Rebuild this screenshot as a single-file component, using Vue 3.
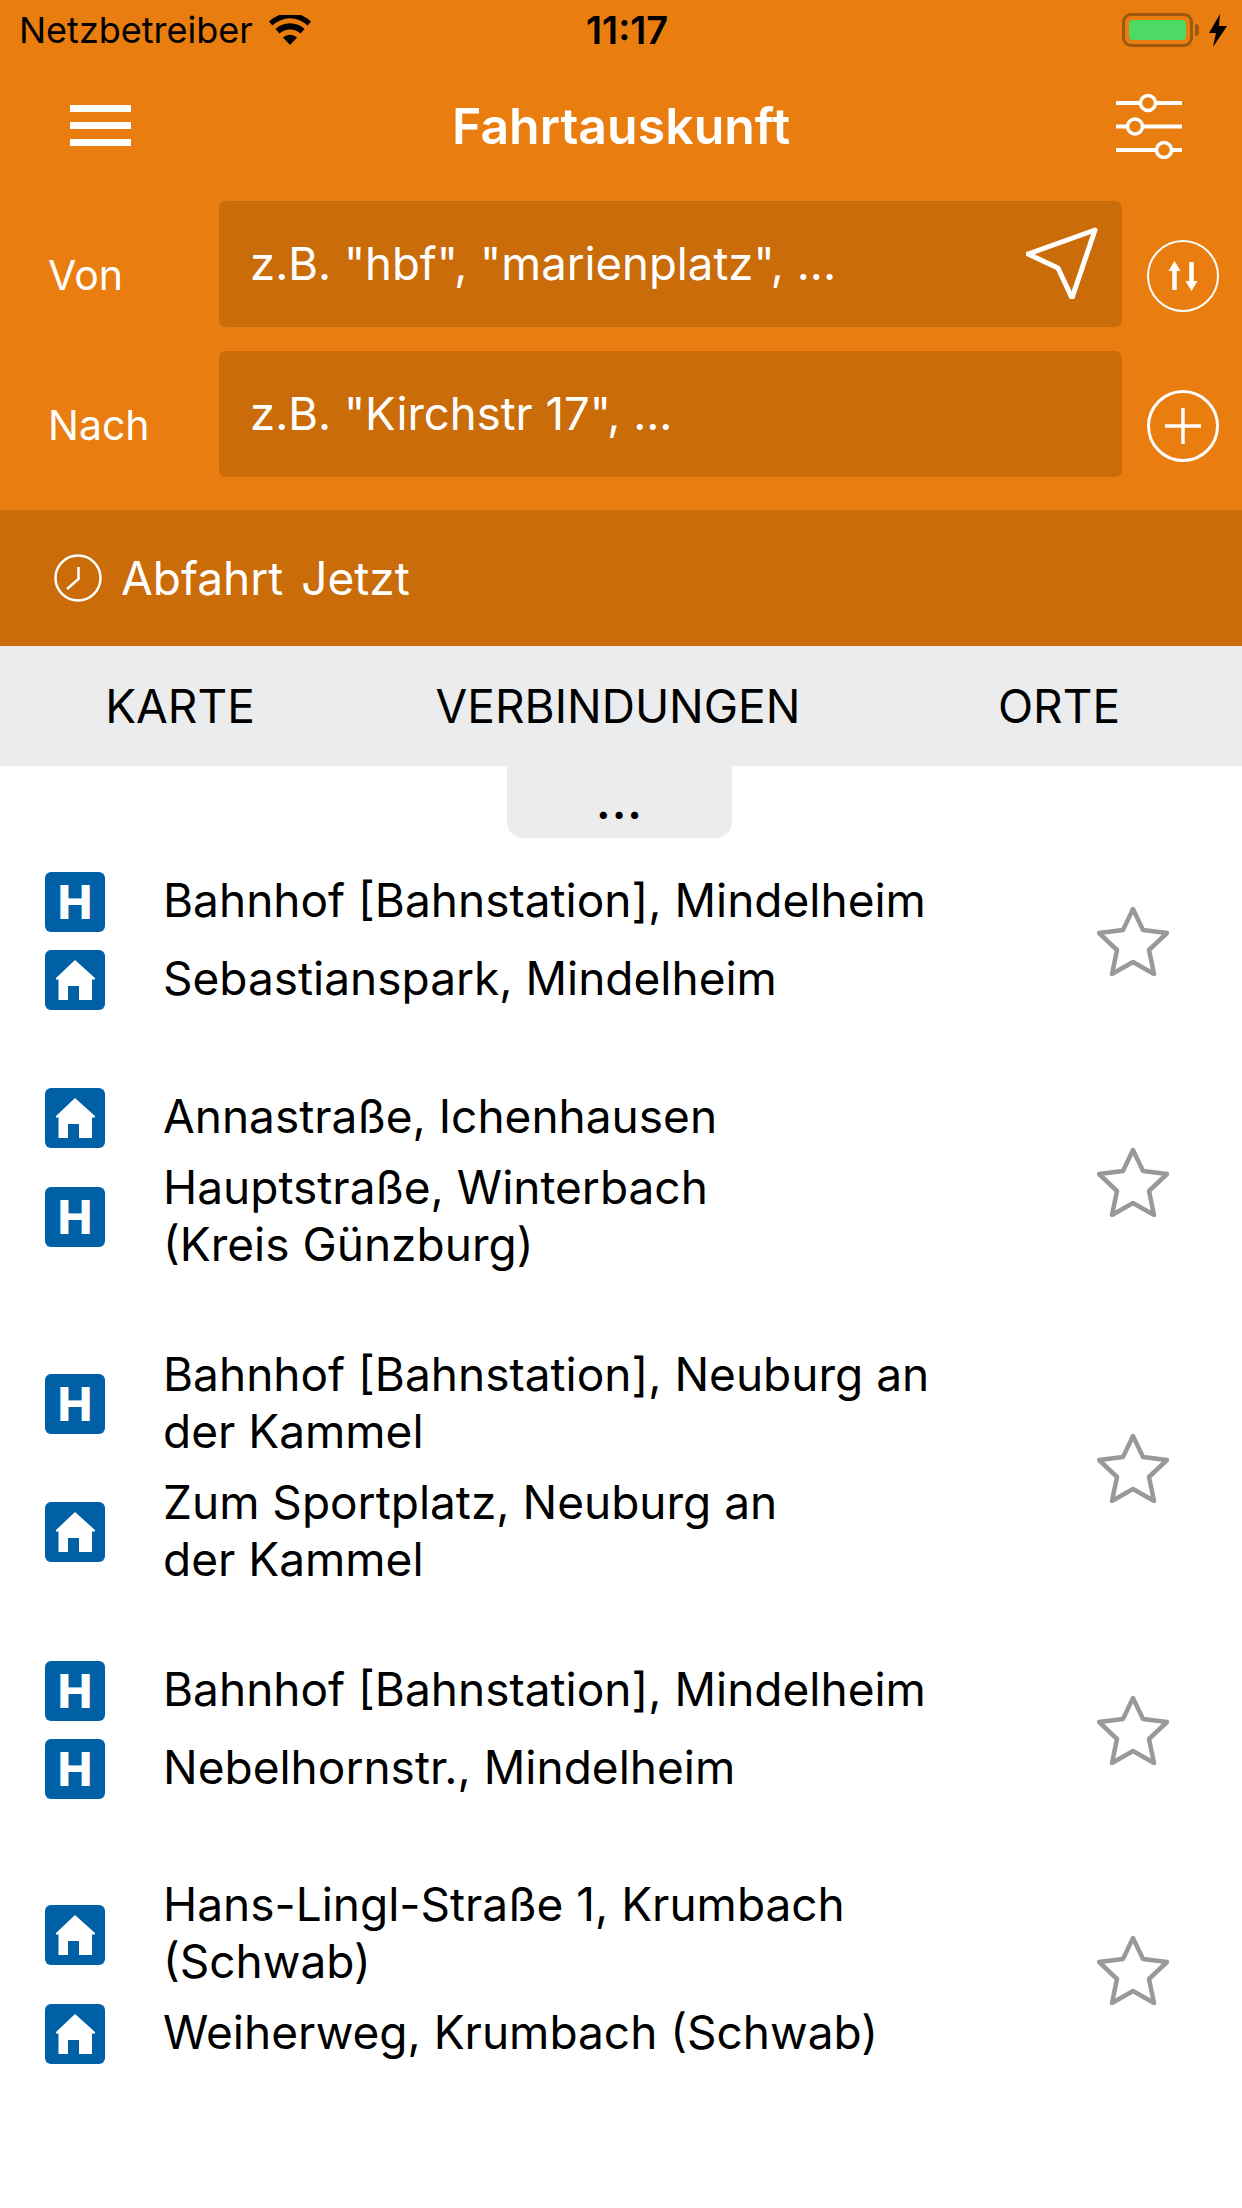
<template>
  <div class="screen">
    <header class="head">
      <div class="status">
        <span class="carrier">Netzbetreiber</span>
        <svg class="wifi" viewBox="0 0 42 30" width="42" height="30">
          <path d="M21 30 L14 22.5 A10 10 0 0 1 28 22.5 Z" fill="#000" />
          <path d="M10.5 18.5 L6.5 14 A21 21 0 0 1 35.500 14 L31.500 18.5 A15.500 15.500 0 0 0 10.500 18.500 Z" fill="#000" />
          <path d="M3.500 10.500 L0 6.500 A30 30 0 0 1 42 6.500 L38.500 10.500 A25 25 0 0 0 3.500 10.500 Z" fill="#000" />
        </svg>
        <span class="time">11:17</span>
        <div class="battery">
          <span class="cell"><span class="charge"></span></span>
          <span class="nub"></span>
          <svg class="bolt" viewBox="0 0 18 33" width="18" height="33">
            <path d="M11 0 L0 19 L7 19 L4 33 L18 12 L10 12 Z" fill="#000" />
          </svg>
        </div>
      </div>

      <div class="nav">
        <button class="menu" aria-label="Menü"><span></span><span></span><span></span></button>
        <h1>Fahrtauskunft</h1>
        <svg class="sliders" viewBox="0 0 66 66" width="66" height="66" fill="none" stroke="#fff">
          <path d="M0 10H66M0 33.500H66M0 57H66" stroke-width="4" />
          <circle cx="32" cy="10" r="7.500" fill="#e97d0f" stroke-width="3.500" />
          <circle cx="19" cy="33.500" r="7.500" fill="#e97d0f" stroke-width="3.500" />
          <circle cx="48" cy="57" r="7.500" fill="#e97d0f" stroke-width="3.500" />
        </svg>
      </div>

      <div class="field-row">
        <label>Von</label>
        <div class="field">
          <span>z.B. "hbf", "marienplatz", ...</span>
          <svg class="locate" viewBox="0 0 72 72" width="72" height="72" fill="none" stroke="#fff" stroke-width="5" stroke-linejoin="round">
            <path d="M69 3 L2 27 L32 41 L46 71 Z" />
          </svg>
        </div>
        <svg class="round" viewBox="0 0 72 72" width="72" height="72" fill="none" stroke="#fff">
          <circle cx="36" cy="36" r="35" stroke-width="2" />
          <path d="M27.500 50V27M44.500 22V45" stroke-width="4.500" />
          <path d="M27.500 21 L33.500 31 H21.500 Z M44.500 51 L38.500 41 H50.500 Z" fill="#fff" stroke="none" />
        </svg>
      </div>
      <div class="field-row">
        <label>Nach</label>
        <div class="field"><span>z.B. "Kirchstr 17", ...</span></div>
        <svg class="round" viewBox="0 0 72 72" width="72" height="72" fill="none" stroke="#fff">
          <circle cx="36" cy="36" r="34.500" stroke-width="3" />
          <path d="M18 36H54M36 18V54" stroke-width="3.500" />
        </svg>
      </div>
    </header>

    <div class="when">
      <svg viewBox="0 0 48 48" width="48" height="48" fill="none" stroke="#fff" stroke-width="2.500">
        <circle cx="24" cy="24" r="22.500" />
        <path d="M24.500 13V25L13 35" />
      </svg>
      <span>Abfahrt&nbsp;&nbsp;Jetzt</span>
    </div>

    <nav class="tabs">
      <span v-for="tab in tabs" :key="tab">{{ tab }}</span>
    </nav>
    <div class="more">...</div>

    <ul class="trips">
      <li v-for="(trip, i) in trips" :key="i" :class="{ short: trip.every(s => s.lines.length === 1) }">
        <div class="stops">
          <div v-for="(stop, j) in trip" :key="j" class="stop">
            <span class="badge">
              <b v-if="stop.type === 'h'">H</b>
              <svg v-else viewBox="0 0 60 60" width="60" height="60">
                <path d="M30 10 L11 28 V29.500 H13.500 V50 H23 V36 H34 V50 H47 V29.500 H50 V28 Z" fill="#fff" />
              </svg>
            </span>
            <div class="name">
              <div v-for="line in stop.lines" :key="line">{{ line }}</div>
            </div>
          </div>
        </div>
        <svg class="star" viewBox="0 0 72 70" width="72" height="70" fill="none" stroke="#999" stroke-width="4.500" stroke-linejoin="round">
          <path d="M36 3 L46 24 L70 27 L52 44 L57 68 L36 56 L15 68 L20 44 L2 27 L26 24 Z" />
        </svg>
      </li>
    </ul>
  </div>
</template>

<script setup>
const tabs = ['KARTE', 'VERBINDUNGEN', 'ORTE']

const trips = [
  [
    { type: 'h', lines: ['Bahnhof [Bahnstation], Mindelheim'] },
    { type: 'home', lines: ['Sebastianspark, Mindelheim'] }
  ],
  [
    { type: 'home', lines: ['Annastraße, Ichenhausen'] },
    { type: 'h', lines: ['Hauptstraße, Winterbach', '(Kreis Günzburg)'] }
  ],
  [
    { type: 'h', lines: ['Bahnhof [Bahnstation], Neuburg an', 'der Kammel'] },
    { type: 'home', lines: ['Zum Sportplatz, Neuburg an', 'der Kammel'] }
  ],
  [
    { type: 'h', lines: ['Bahnhof [Bahnstation], Mindelheim'] },
    { type: 'h', lines: ['Nebelhornstr., Mindelheim'] }
  ],
  [
    { type: 'home', lines: ['Hans-Lingl-Straße 1, Krumbach', '(Schwab)'] },
    { type: 'home', lines: ['Weiherweg, Krumbach (Schwab)'] }
  ]
]
</script>

<style>
html, body {
  margin: 0;
  background: #fff;
}
</style>

<style scoped>
.screen {
  width: 1242px;
  height: 2208px;
  overflow: hidden;
  font-family: Inter, "Liberation Sans", sans-serif;
  color: #000;
  background: #fff;
}

.head {
  height: 510px;
  box-sizing: border-box;
  background: #e97d0f;
  color: #fff;
}

.status {
  display: flex;
  align-items: center;
  height: 60px;
  padding-left: 19px;
  color: #000;
  font-size: 36px;
  position: relative;
}
.wifi {
  margin-left: 16px;
}
.time {
  position: absolute;
  left: 586px;
  font-weight: 600;
  font-size: 38px;
}
.battery {
  margin-left: auto;
  margin-right: 15px;
  display: flex;
  align-items: center;
}
.cell {
  display: block;
  box-sizing: border-box;
  width: 71px;
  height: 34px;
  padding: 4px;
  border: 3px solid #9c5a10;
  border-radius: 9px;
}
.charge {
  display: block;
  height: 100%;
  border-radius: 4px;
  background: #4cd964;
}
.nub {
  width: 4px;
  height: 12px;
  margin-left: 2px;
  border-radius: 0 6px 6px 0;
  background: #9c5a10;
}
.bolt {
  margin-left: 10px;
}

.nav {
  height: 141px;
  position: relative;
  display: flex;
  align-items: center;
  justify-content: space-between;
  padding: 0 60px 10px 70px;
  box-sizing: border-box;
}
.nav h1 {
  position: absolute;
  left: 0;
  right: 0;
  margin: 0;
  text-align: center;
  font-size: 50px;
  font-weight: 600;
}
.menu {
  display: flex;
  flex-direction: column;
  gap: 10px;
  width: 61px;
  padding: 0;
  border: 0;
  background: none;
}
.menu span {
  height: 7px;
  background: #fff;
}

.field-row {
  display: flex;
  align-items: center;
  height: 126px;
  margin-bottom: 24px;
  padding-left: 48px;
}
.field-row label {
  width: 171px;
  margin-top: 21px;
  font-size: 41px;
}
.field {
  width: 903px;
  height: 100%;
  box-sizing: border-box;
  display: flex;
  align-items: center;
  justify-content: space-between;
  padding: 0 24px 0 31px;
  border-radius: 7px;
  background: #ca6c0a;
  font-size: 45.500px;
}
.field span {
  margin-top: -2px;
}
.locate {
  margin-top: -2px;
}
.round {
  margin: 24px 0 0 25px;
  flex: none;
}

.when {
  height: 136px;
  display: flex;
  align-items: center;
  gap: 19px;
  padding-left: 54px;
  background: #ca6c0a;
  color: #fff;
  font-size: 46px;
  word-spacing: -4px;
}

.tabs {
  display: grid;
  grid-template-columns: 360px 516px 366px;
  align-items: center;
  height: 120px;
  text-align: center;
  background: #ebecee;
  font-size: 46px;
}

.more {
  width: 225px;
  height: 72px;
  margin-left: 507px;
  text-align: center;
  border-radius: 0 0 16px 16px;
  background: #ebecee;
  font-size: 46px;
  font-weight: 600;
  letter-spacing: 1px;
  line-height: 72px;
}

.trips {
  list-style: none;
  margin: 34px 0 0;
  padding: 0 73px 0 45px;
}
.trips li {
  display: flex;
  align-items: center;
  justify-content: space-between;
  margin-bottom: 70px;
}
.trips li.short {
  margin-bottom: 77.500px;
}
.stops {
  display: flex;
  flex-direction: column;
  gap: 11px;
}
.short .stops {
  gap: 18px;
}
.stop {
  display: flex;
  align-items: center;
  gap: 58px;
  min-height: 60px;
  font-size: 46px;
  line-height: 57px;
}
.name {
  padding-bottom: 3px;
}
.badge {
  flex: none;
  width: 60px;
  height: 60px;
  display: flex;
  align-items: center;
  justify-content: center;
  border-radius: 6px;
  background: #0060a5;
  color: #fff;
  font-size: 46px;
}
.badge b {
  font-weight: 800;
  line-height: 1;
}
.star {
  flex: none;
}
</style>
